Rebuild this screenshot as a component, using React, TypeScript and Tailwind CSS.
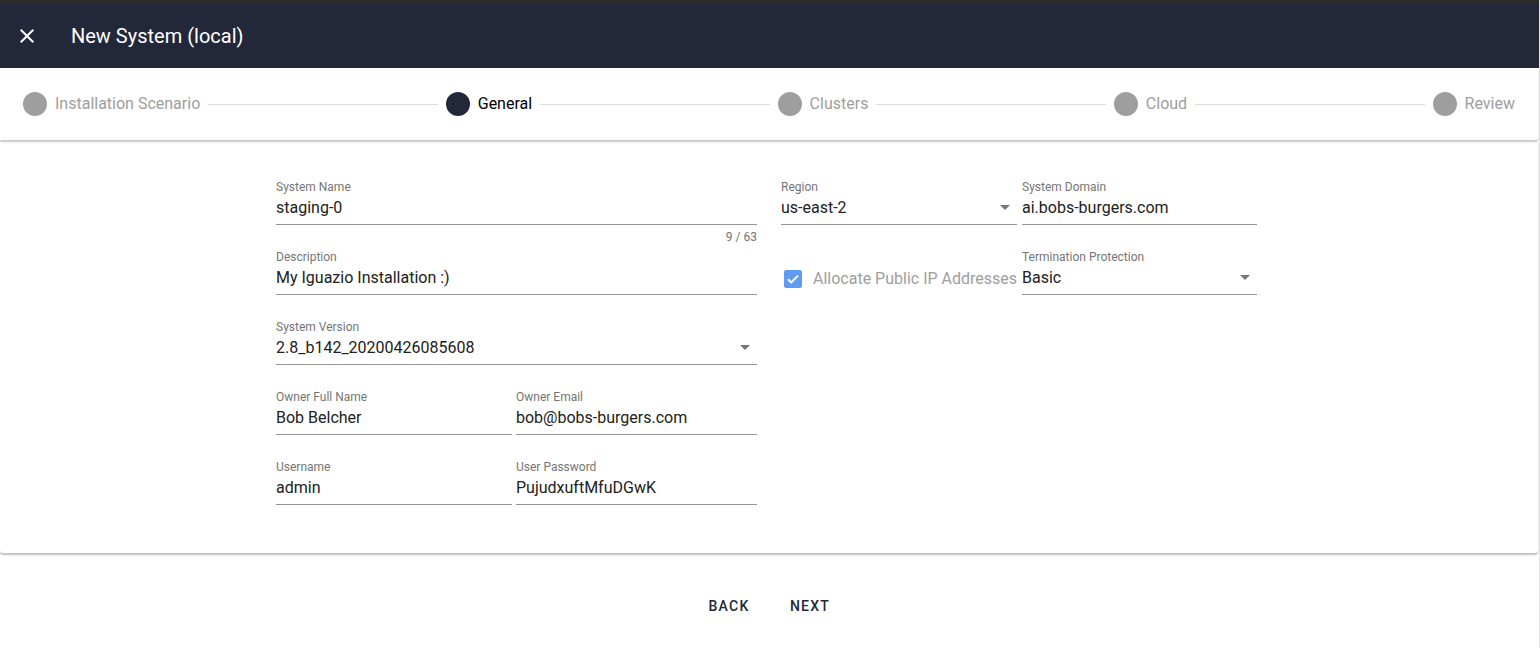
import React from 'react';

const font = { fontFamily: 'Roboto, "Liberation Sans", sans-serif' };

const steps = ['Installation Scenario', 'General', 'Clusters', 'Cloud', 'Review'];
const activeStep = 1;

function DropArrow() {
  return (
    <svg viewBox="0 0 24 24" className="w-6 h-6 absolute right-0 top-[1px] fill-[#757575]">
      <path d="M7 10l5 5 5-5z" />
    </svg>
  );
}

function Field({ label, value, select, helper }: { label: string; value: string; select?: boolean; helper?: string }) {
  return (
    <div className="flex flex-col min-w-0">
      <div className="text-[12px] leading-[14px] text-[#757575]">{label}</div>
      <div className="relative pt-[4px] pb-[7px] border-b border-[#949494]">
        <div className="text-[16px] leading-[19px] text-[#212121] whitespace-nowrap">{value}</div>
        {select && <DropArrow />}
      </div>
      {helper && <div className="mt-[5px] text-[12px] leading-[14px] text-[#757575] text-right">{helper}</div>}
    </div>
  );
}

export default function App() {
  return (
    <div className="min-h-[648px] bg-white border-r border-[#e2e2e2]" style={font}>
      {/* Top bar */}
      <div className="h-[3px] bg-[#2c2c2c]" />
      <div className="h-[65px] bg-[#222839] flex items-center pl-[15px]">
        <svg viewBox="0 0 24 24" className="w-6 h-6 fill-white">
          <path d="M19 6.41L17.59 5 12 10.59 6.41 5 5 6.41 10.59 12 5 17.59 6.41 19 12 13.41 17.59 19 19 17.59 13.41 12z" />
        </svg>
        <div className="ml-[32px] text-[20px] text-white">New System (local)</div>
      </div>

      {/* Stepper */}
      <div className="relative z-10 mr-[1px] h-[72px] bg-white flex items-center pl-[15px] pr-[15px] shadow-[0_2px_2px_rgba(0,0,0,0.22)] rounded-br-[3px]">
        {steps.map((s, i) => (
          <React.Fragment key={s}>
            {i > 0 && <div className="flex-1 h-px bg-[#dddddd]" />}
            <div className="flex items-center px-2">
              <div className={`w-6 h-6 rounded-full ${i === activeStep ? 'bg-[#222839]' : 'bg-[#9e9e9e]'}`} />
              <div className={`ml-2 mb-[2px] text-[16px] leading-[19px] ${i === activeStep ? 'text-black' : 'text-[#9e9e9e]'}`}>{s}</div>
            </div>
          </React.Fragment>
        ))}
      </div>

      {/* Form card */}
      <div className="relative mr-[1px] bg-white pt-[40px] pb-[23px] shadow-[0_2px_2px_rgba(0,0,0,0.25)] rounded-b-[3px]">
        <div className="ml-[276px] flex gap-x-[24px]">
          {/* Left column */}
          <div className="w-[481px] flex flex-col">
            <div className="h-[70px]">
              <Field label="System Name" value="staging-0" helper="9 / 63" />
            </div>
            <div className="h-[70px]">
              <Field label="Description" value="My Iguazio Installation :)" />
            </div>
            <div className="h-[70px]">
              <Field label="System Version" value="2.8_b142_20200426085608" select />
            </div>
            <div className="h-[70px] grid grid-cols-[236px_241px] gap-x-[4px]">
              <Field label="Owner Full Name" value="Bob Belcher" />
              <Field label="Owner Email" value="bob@bobs-burgers.com" />
            </div>
            <div className="h-[70px] grid grid-cols-[236px_241px] gap-x-[4px]">
              <Field label="Username" value="admin" />
              <Field label="User Password" value="PujudxuftMfuDGwK" />
            </div>
          </div>

          {/* Right column */}
          <div className="w-[476px] flex flex-col">
            <div className="h-[70px] grid grid-cols-[236px_235px] gap-x-[5px]">
              <Field label="Region" value="us-east-2" select />
              <Field label="System Domain" value="ai.bobs-burgers.com" />
            </div>
            <div className="h-[70px] grid grid-cols-[236px_235px] gap-x-[5px]">
              <div className="pt-[14px]">
                <div className="h-[29px] flex items-center pl-[3px]">
                  <svg viewBox="0 0 18 18" className="w-[18px] h-[18px] shrink-0">
                    <rect x="0" y="0" width="18" height="18" rx="2" fill="#5f9bf3" />
                    <path d="M4 9.2l3.2 3.2L14 5.6" stroke="white" strokeWidth="2" fill="none" />
                  </svg>
                  <span className="ml-[11px] text-[16px] leading-[19px] text-[#9e9e9e] whitespace-nowrap">Allocate Public IP Addresses</span>
                </div>
              </div>
              <Field label="Termination Protection" value="Basic" select />
            </div>
          </div>
        </div>
      </div>

      {/* Actions */}
      <div className="mt-[35px] flex justify-center gap-x-[17px]">
        <button className="w-[64px] h-[36px] text-[14px] font-medium tracking-[1.25px] text-[#222839]">BACK</button>
        <button className="w-[64px] h-[36px] text-[14px] font-medium tracking-[1.25px] text-[#222839]">NEXT</button>
      </div>
    </div>
  );
}
